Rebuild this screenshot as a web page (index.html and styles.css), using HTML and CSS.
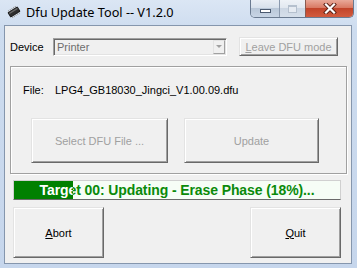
FILE: index.html
```html
<!DOCTYPE html>
<html>
<head>
<meta charset="utf-8">
<title>Dfu Update Tool</title>
<link rel="stylesheet" href="styles.css">
</head>
<body>
<div class="window">
  <div class="titlebar">
    <svg class="app-icon" width="14" height="12" viewBox="0 0 14 12">
      <g transform="rotate(-32 7 6)">
        <g stroke="#9a9a9a" stroke-width="1">
          <line x1="3" y1="1.5" x2="3" y2="10.5"/>
          <line x1="5" y1="1.5" x2="5" y2="10.5"/>
          <line x1="7" y1="1.5" x2="7" y2="10.5"/>
          <line x1="9" y1="1.5" x2="9" y2="10.5"/>
          <line x1="11" y1="1.5" x2="11" y2="10.5"/>
        </g>
        <rect x="1.5" y="3.5" width="11" height="5" fill="#2e2e2e" stroke="#111" stroke-width="0.8"/>
        <rect x="2.2" y="4.1" width="9.6" height="1.4" fill="#6a6a6a"/>
      </g>
    </svg>
    <span class="title">Dfu Update Tool -- V1.2.0</span>
    <div class="caption-buttons">
      <div class="cap cap-min"><span class="min-glyph"></span></div>
      <div class="cap cap-max"><span class="max-glyph"></span></div>
      <div class="cap cap-close">
        <svg width="14" height="11" viewBox="0 0 14 11">
          <path d="M3 1.5 L11 9.5 M11 1.5 L3 9.5" stroke="#5a1f14" stroke-width="4" stroke-linecap="square"/>
          <path d="M3 1.5 L11 9.5 M11 1.5 L3 9.5" stroke="#ffffff" stroke-width="2.2" stroke-linecap="square"/>
        </svg>
      </div>
    </div>
  </div>
  <div class="client">
    <div class="device-row">
      <span class="label">Device</span>
      <div class="combo">
        <span class="combo-text">Printer</span>
        <span class="combo-drop"><span class="arrow"></span></span>
      </div>
      <div class="btn btn-leave disabled"><span><u>L</u>eave DFU mode</span></div>
    </div>
    <div class="group">
      <div class="file-row">
        <span class="file-label">File:</span>
        <span class="file-name">LPG4_GB18030_Jingci_V1.00.09.dfu</span>
      </div>
      <div class="group-buttons">
        <div class="btn btn-select disabled"><span>Select DFU File ...</span></div>
        <div class="btn btn-update disabled"><span>Update</span></div>
      </div>
    </div>
    <div class="progress" style="--pct:18%">
      <div class="progress-fill"></div>
      <div class="progress-label">Target 00: Updating - Erase Phase (18%)...</div>
      <div class="progress-label inverse">Target 00: Updating - Erase Phase (18%)...</div>
    </div>
    <div class="action-row">
      <div class="btn btn-big"><span><u>A</u>bort</span></div>
      <div class="btn btn-big"><span><u>Q</u>uit</span></div>
    </div>
  </div>
</div>
</body>
</html>
```
FILE: styles.css
```css
html, body {
  margin: 0;
  padding: 0;
}
body {
  width: 357px;
  height: 268px;
  overflow: hidden;
  font-family: "Liberation Sans", Arial, sans-serif;
  font-size: 11px;
  color: #000;
}
.window {
  width: 357px;
  height: 268px;
  box-sizing: border-box;
  background: linear-gradient(180deg, #dbe6f4 0px, #cddcef 30px, #c6d6ec 100%);
  padding: 0 5px 4px 4px;
  display: flex;
  flex-direction: column;
}
.titlebar {
  height: 25px;
  flex: none;
  display: flex;
  align-items: flex-start;
  position: relative;
}
.app-icon {
  margin: 6px 0 0 3px;
  flex: none;
}
.title {
  font-family: "Noto Sans", "Open Sans", sans-serif;
  font-size: 12.7px;
  line-height: 16px;
  margin: 4px 0 0 5px;
  color: #000;
  flex: 1;
}
.caption-buttons {
  display: flex;
  margin-right: -2px;
  height: 18px;
  border: 1px solid #6a7a90;
  border-top: none;
  border-radius: 0 0 5px 5px;
  overflow: hidden;
  box-sizing: border-box;
}
.cap {
  height: 100%;
  display: flex;
  align-items: center;
  justify-content: center;
  box-sizing: border-box;
}
.cap-min {
  width: 29px;
  background: linear-gradient(180deg, #e9eef5 0%, #d8e1ec 45%, #b9c7d8 50%, #c8d5e5 100%);
  border-right: 1px solid #8a99ae;
  align-items: flex-end;
  padding-bottom: 4px;
}
.min-glyph {
  width: 9px;
  height: 2px;
  background: #fff;
  border: 1px solid #4b5a70;
}
.cap-max {
  width: 26px;
  background: linear-gradient(180deg, #eef2f7 0%, #e2e8f0 45%, #ccd6e3 50%, #d6dfea 100%);
  border-right: 1px solid #8a5a50;
}
.max-glyph {
  width: 7px;
  height: 5px;
  border: 1px solid #b5c0ce;
  border-top-width: 2px;
  background: #e6ebf2;
}
.cap-close {
  width: 47px;
  background: linear-gradient(180deg, #e9a999 0%, #d97a64 45%, #c2442a 50%, #d25b3e 100%);
}
.client {
  flex: 1;
  background: #f0f0f0;
  border: 1px solid #8596ad;
  display: flex;
  flex-direction: column;
}
.device-row {
  display: flex;
  align-items: center;
  margin-top: 11px;
  height: 19px;
  padding-left: 5px;
}
.label {
  width: 43px;
  flex: none;
}
.combo {
  width: 174px;
  height: 18px;
  box-sizing: border-box;
  border: 1px solid;
  border-color: #a0a0a0 #fff #fff #a0a0a0;
  box-shadow: inset 1px 1px #696969, inset -1px -1px #e3e3e3;
  background: #f0f0f0;
  display: flex;
  align-items: center;
  padding: 0 1px 0 3px;
}
.combo-text {
  flex: 1;
  color: #6d6d6d;
}
.combo-drop {
  width: 12px;
  height: 14px;
  box-sizing: border-box;
  border: 1px solid;
  border-color: #e3e3e3 #a0a0a0 #a0a0a0 #e3e3e3;
  background: #f0f0f0;
  display: flex;
  align-items: center;
  justify-content: center;
}
.arrow {
  width: 0;
  height: 0;
  border-left: 3px solid transparent;
  border-right: 3px solid transparent;
  border-top: 3px solid #a0a0a0;
}
.btn {
  box-sizing: border-box;
  border: 1px solid;
  border-color: #e3e3e3 #696969 #696969 #e3e3e3;
  box-shadow: inset 1px 1px #fff, inset -1px -1px #a0a0a0;
  background: #f0f0f0;
  display: flex;
  align-items: center;
  justify-content: center;
  flex: none;
}
.btn.disabled {
  color: #a0a0a0;
}
.btn-leave {
  width: 99px;
  height: 19px;
  margin-left: 12px;
}
.group {
  margin: 10px 0 0 5px;
  width: 337px;
  height: 108px;
  box-sizing: border-box;
  border: 1px solid #a0a0a0;
  box-shadow: inset 1px 1px #fff, 1px 1px #fff;
  display: flex;
  flex-direction: column;
}
.file-row {
  display: flex;
  margin-top: 17px;
  padding-left: 12px;
  line-height: 13px;
}
.file-label {
  width: 32px;
}
.group-buttons {
  display: flex;
  gap: 16px;
  margin-top: 21px;
  padding-left: 20px;
}
.btn-select {
  width: 137px;
  height: 45px;
}
.btn-update {
  width: 135px;
  height: 45px;
}
.progress {
  position: relative;
  margin: 6px 0 0 8px;
  width: 328px;
  height: 20px;
  box-sizing: border-box;
  border: 1px solid #d0d0d0;
  border-bottom-color: #6a6a6a;
  background: #f6fdf6;
  overflow: hidden;
}
.progress-fill {
  position: absolute;
  left: 0;
  top: 0;
  bottom: 0;
  width: var(--pct);
  background: #008000;
}
.progress-label {
  position: relative;
  text-align: center;
  font-weight: bold;
  font-size: 14px;
  letter-spacing: -0.1px;
  line-height: 18px;
  color: #0a8a0a;
  white-space: nowrap;
}
.progress-label.inverse {
  position: absolute;
  left: 0;
  right: 0;
  top: 0;
  color: #fff;
  clip-path: inset(0 calc(100% - var(--pct)) 0 0);
}
.action-row {
  display: flex;
  justify-content: space-between;
  margin: 7px 0 0 8px;
  width: 328px;
}
.btn-big {
  width: 91px;
  height: 51px;
}
```
